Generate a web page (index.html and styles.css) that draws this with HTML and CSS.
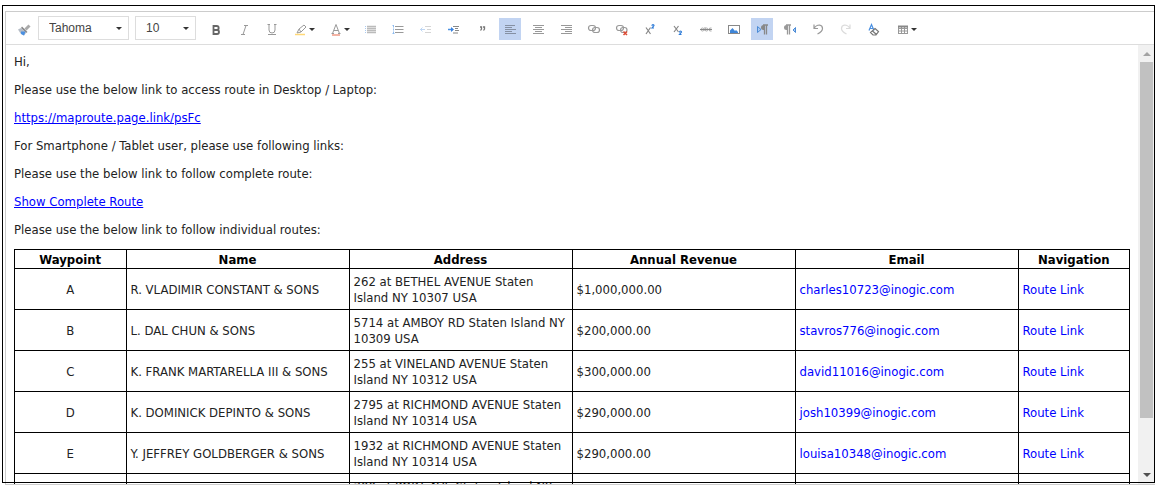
FILE: index.html
```
<!DOCTYPE html>
<html lang="en">
<head>
    <meta charset="UTF-8">
    <meta name="viewport" content="width=device-width, initial-scale=1.0">
    <title>Email Editor</title>
    <link rel="stylesheet" href="styles.css">
</head>
<body>
    <div class="page">
        <div class="editor">
            <div class="toolbar">
                <button class="tool painter" title="Format painter">
                    <svg viewBox="0 0 16 16"><path d="M13.500 3.500l-4 4" stroke="#aaa" stroke-width="3"/><path d="M6 4.500l5.500 5.500-1.500 1L5 6z" fill="#888"/><path d="M2 7.500l3-1.500 5 5-2 2.500-3.500-2z" fill="#b5bcc6"/><path d="M5 9.500h4.500l-1.500 4-3-1.500z" fill="#4a90e2"/></svg>
                </button>
                <span class="dropdown font-name">
                    <select aria-label="Font">
                        <option>Tahoma</option>
                    </select>
                    <span class="caret"></span>
                </span>
                <span class="dropdown font-size">
                    <select aria-label="Font size">
                        <option>10</option>
                    </select>
                    <span class="caret"></span>
                </span>
                <button class="tool" title="Bold">
                    <svg viewBox="0 0 16 16"><path d="M5.500 4h3.200a2 2 0 0 1 0 4H5.500zM5.500 8h3.500a2 2 0 0 1 0 4H5.500z" stroke="#666" stroke-width="1.800"/></svg>
                </button>
                <button class="tool" title="Italic">
                    <svg viewBox="0 0 16 16"><path d="M8 3.500h4M5 12.500h4M10 3.500l-3 9" stroke="#999"/></svg>
                </button>
                <button class="tool" title="Underline">
                    <svg viewBox="0 0 16 16"><path d="M5 2.500v5.500a3 3 0 0 0 6 0V2.500M3.500 2.500h2.500M10 2.500h2.500M4 12.500h8" stroke="#999"/></svg>
                </button>
                <button class="tool wide" title="Highlight color">
                    <svg viewBox="0 0 16 16"><path d="M4 11l2-4 5-4 2 2-5 5zM6 7l2 3" stroke="#999" fill="#fff"/><path d="M2 12.500h10" stroke="#ffd878" stroke-width="1.500"/></svg>
                    <span class="caret"></span>
                </button>
                <button class="tool wide" title="Font color">
                    <svg viewBox="0 0 16 16"><path d="M4.500 11.500l3.500-9 3.500 9M6 8.500h4M3.500 11.500h2.500M10 11.500h2.500" stroke="#999"/><path d="M4 13h8" stroke="#e8694a"/></svg>
                    <span class="caret"></span>
                </button>
                <button class="tool" title="Bulleted list">
                    <svg viewBox="0 0 16 16"><path d="M3 4.500h1M3 6.500h1M3 8.500h1M3 10.500h1" stroke="#a9cbf2"/><path d="M5 4.500h9M5 6.500h9M5 8.500h9M5 10.500h9" stroke="#bbb" stroke-width="1.600"/></svg>
                </button>
                <button class="tool" title="Numbered list">
                    <svg viewBox="0 0 16 16"><path d="M3.500 3v2.500M3.500 6.500v2M3.500 9.500v2.500M2.500 3.500h1M2.500 11.500h2" stroke="#8fbcf0"/><path d="M5 4.500h8.500M5 7.500h8.500M5 10.500h8.500" stroke="#999"/></svg>
                </button>
                <button class="tool faded" title="Decrease indent">
                    <svg viewBox="0 0 16 16"><path d="M2 7.500h5M4.500 5.500l-2 2 2 2" stroke="#4a90e2"/><path d="M7 4.500h6M9 7.500h4M7 10.500h6" stroke="#888"/></svg>
                </button>
                <button class="tool" title="Increase indent">
                    <svg viewBox="0 0 16 16"><path d="M2 7.500h5" stroke="#4a90e2" stroke-width="1.500"/><path d="M5 5l3 2.500-3 2.500z" fill="#3a83e0"/><path d="M7 4.500h6M9 6.500h3M9 8.500h4M7 11h5" stroke="#888"/></svg>
                </button>
                <button class="tool" title="Quote">
                    <svg viewBox="0 0 16 16"><path d="M6 5h1.500v2l-1 1.500M9 5h1.500v2l-1 1.500" stroke="#777" stroke-width="1.300"/></svg>
                </button>
                <button class="tool active" title="Align left">
                    <svg viewBox="0 0 16 16"><path d="M3 3.500h10M3 5.500h7M3 7.500h11M3 9.500h7M3 11.500h11" stroke="#8590a3"/></svg>
                </button>
                <button class="tool" title="Align center">
                    <svg viewBox="0 0 16 16"><path d="M3 3.500h11M5 5.500h7M3 7.500h11M5 9.500h7M3 11.500h11" stroke="#999"/></svg>
                </button>
                <button class="tool" title="Align right">
                    <svg viewBox="0 0 16 16"><path d="M3 3.500h11M7 5.500h7M3 7.500h11M7 9.500h7M3 11.500h11" stroke="#999"/></svg>
                </button>
                <button class="tool" title="Insert link">
                    <svg viewBox="0 0 16 16"><g stroke="#999" stroke-width="1.200"><rect x="2.500" y="3.500" width="7" height="5" rx="2.500"/><rect x="6.500" y="5.500" width="7" height="5" rx="2.500"/></g></svg>
                </button>
                <button class="tool" title="Remove link">
                    <svg viewBox="0 0 16 16"><g stroke="#999" stroke-width="1.200"><rect x="2.500" y="3.500" width="7" height="5" rx="2.500"/><rect x="6.500" y="5.500" width="6.500" height="5" rx="2.500"/></g><path d="M9.500 9.500l3.500 3.500M13 9.500l-3.500 3.500" stroke="#dc4b35" stroke-width="1.500"/></svg>
                </button>
                <button class="tool" title="Superscript">
                    <svg viewBox="0 0 16 16"><path d="M4 5.500l4.500 6.500M8.500 5.500l-4.500 6.500" stroke="#888" stroke-width="1.200"/><path d="M10 4q0-1.500 1-1.500t1 1L10 6h2" stroke="#2f7cd8" stroke-width="1.200"/></svg>
                </button>
                <button class="tool" title="Subscript">
                    <svg viewBox="0 0 16 16"><path d="M4 4l4.500 6M8.500 4L4 10" stroke="#888" stroke-width="1.200"/><path d="M9.500 10.500q0-1.500 1-1.500t1 1l-2 2.500h2" stroke="#2f7cd8" stroke-width="1.200"/></svg>
                </button>
                <button class="tool" title="Strikethrough">
                    <svg viewBox="0 0 16 16"><g stroke="#aaa"><circle cx="4.500" cy="7.500" r="1.500"/><circle cx="8.500" cy="7.500" r="1.500"/><path d="M7 5v4M13.500 6q-2.500-.5-2.500 1.500t2.500 1.500"/></g><path d="M2 7.500h12" stroke="#888"/></svg>
                </button>
                <button class="tool" title="Insert image">
                    <svg viewBox="0 0 16 16"><rect x="2.500" y="3.500" width="11" height="8" fill="#fff" stroke="#888"/><path d="M4 11V8.500L6.500 6 9 9l1-1 2 2v1z" fill="#3f86d8"/></svg>
                </button>
                <button class="tool active" title="Left to right">
                    <svg viewBox="0 0 16 16"><path d="M3.500 4.500l3.500 3-3.500 3z" fill="#a9c8f2" stroke="#4a8bd6"/><path d="M10.500 3H9.500a2.500 2.500 0 0 0 0 5h1z" fill="#888"/><path d="M9 3h5M10.500 3v9.500M12.500 3v9.500" stroke="#888" stroke-width="1.300"/></svg>
                </button>
                <button class="tool" title="Right to left">
                    <svg viewBox="0 0 16 16"><path d="M5.500 3H4.500a2.500 2.500 0 0 0 0 5H5.500z" fill="#999"/><path d="M4 3h5M5.500 3v9.500M7.500 3v9.500" stroke="#999" stroke-width="1.300"/><path d="M13.500 5.500l-2.500 2.500 2.500 2.500z" fill="#a9c8f2" stroke="#4a8bd6"/></svg>
                </button>
                <button class="tool" title="Undo">
                    <svg viewBox="0 0 16 16"><path d="M4 2.500v4h4M4 6.500q2-3.500 5.500-3.500 3 .5 3 3.500T7.500 12" stroke="#999" stroke-width="1.200"/></svg>
                </button>
                <button class="tool faded" title="Redo">
                    <svg viewBox="0 0 16 16"><path d="M12 2.500v4H8M12 6.500q-2-3.500-5.500-3.500-3 .5-3 3.500t5 5.500" stroke="#999" stroke-width="1.200"/></svg>
                </button>
                <button class="tool" title="Clear formatting">
                    <svg viewBox="0 0 16 16"><path d="M3 8.500l2.500-6 2.500 6M4 6.500h3" stroke="#4a90e2" stroke-width="1.200"/><path d="M9 6.500l3.500 3-2.500 3.500H7l-2.500-2.500zM6.500 9l4 3.500" stroke="#777" stroke-width="1.200"/></svg>
                </button>
                <button class="tool wide" title="Insert table">
                    <svg viewBox="0 0 16 16"><path d="M3.500 4v8M6.500 4v8M9.500 4v8M12.500 4v8M3 6.500h10M3 9h10M3 11.500h10" stroke="#999"/><path d="M3 4.500h10" stroke="#888" stroke-width="2"/></svg>
                    <span class="caret"></span>
                </button>
            </div>

            <div class="editor-body">
                <div class="content">
                    <p>Hi,</p>
                    <p>Please use the below link to access route in Desktop / Laptop:</p>
                    <p><a href="#">https://maproute.page.link/psFc</a></p>
                    <p>For Smartphone / Tablet user, please use following links:</p>
                    <p>Please use the below link to follow complete route:</p>
                    <p><a href="#">Show Complete Route</a></p>
                    <p>Please use the below link to follow individual routes:</p>

                    <table class="routes">
                        <colgroup>
                            <col class="narrow">
                            <col>
                            <col>
                            <col>
                            <col>
                            <col class="narrow">
                        </colgroup>
                        <thead>
                            <tr>
                                <th>Waypoint</th>
                                <th>Name</th>
                                <th>Address</th>
                                <th>Annual Revenue</th>
                                <th>Email</th>
                                <th>Navigation</th>
                            </tr>
                        </thead>
                        <tbody>
                            <tr>
                                <td class="waypoint">A</td>
                                <td>R. VLADIMIR CONSTANT &amp; SONS</td>
                                <td>262 at BETHEL AVENUE Staten Island NY 10307 USA</td>
                                <td>$1,000,000.00</td>
                                <td><a href="#">charles10723@inogic.com</a></td>
                                <td><a href="#">Route Link</a></td>
                            </tr>
                            <tr>
                                <td class="waypoint">B</td>
                                <td>L. DAL CHUN &amp; SONS</td>
                                <td>5714 at AMBOY RD Staten Island NY 10309 USA</td>
                                <td>$200,000.00</td>
                                <td><a href="#">stavros776@inogic.com</a></td>
                                <td><a href="#">Route Link</a></td>
                            </tr>
                            <tr>
                                <td class="waypoint">C</td>
                                <td>K. FRANK MARTARELLA III &amp; SONS</td>
                                <td>255 at VINELAND AVENUE Staten Island NY 10312 USA</td>
                                <td>$300,000.00</td>
                                <td><a href="#">david11016@inogic.com</a></td>
                                <td><a href="#">Route Link</a></td>
                            </tr>
                            <tr>
                                <td class="waypoint">D</td>
                                <td>K. DOMINICK DEPINTO &amp; SONS</td>
                                <td>2795 at RICHMOND AVENUE Staten Island NY 10314 USA</td>
                                <td>$290,000.00</td>
                                <td><a href="#">josh10399@inogic.com</a></td>
                                <td><a href="#">Route Link</a></td>
                            </tr>
                            <tr>
                                <td class="waypoint">E</td>
                                <td>Y. JEFFREY GOLDBERGER &amp; SONS</td>
                                <td>1932 at RICHMOND AVENUE Staten Island NY 10314 USA</td>
                                <td>$290,000.00</td>
                                <td><a href="#">louisa10348@inogic.com</a></td>
                                <td><a href="#">Route Link</a></td>
                            </tr>
                            <tr>
                                <td></td>
                                <td></td>
                                <td>300 at PORT AVE Staten Island NY 10314 USA</td>
                                <td></td>
                                <td></td>
                                <td></td>
                            </tr>
                        </tbody>
                    </table>
                </div>
                <div class="scrollbar">
                    <span class="arrow-up"></span>
                    <div class="track"><div class="thumb"></div></div>
                    <span class="arrow-down"></span>
                </div>
            </div>
        </div>
        <div class="outline"></div>
    </div>
</body>
</html>
```

FILE: styles.css
```
* {
    box-sizing: border-box;
}

body {
    margin: 0;
    background-color: #fff;
    color: #222;
    font-family: "DejaVu Sans Condensed", Tahoma, sans-serif;
    font-size: 13px;
    line-height: 16px;
}

.page {
    position: relative;
    display: flex;
    height: 100vh;
    padding: 11px 2px 1px 5px;
}

/* Black frame drawn on top of the editor */
.outline {
    position: absolute;
    top: 5px;
    right: 2px;
    bottom: 3px;
    left: 2px;
    border: 1px solid #000;
    pointer-events: none;
}

.editor {
    display: flex;
    flex: 1;
    flex-direction: column;
    border: 1px solid #ccc;
    border-right: none;
}

/* Toolbar */
.toolbar {
    display: flex;
    align-items: center;
    flex-shrink: 0;
    height: 33px;
    padding-left: 7px;
    border-bottom: 1px solid #ddd;
}

.tool {
    display: flex;
    align-items: center;
    justify-content: center;
    width: 22px;
    height: 22px;
    margin: 2px 6px 0 0;
    padding: 1px 0 0;
    border: none;
    background: none;
}

.tool svg {
    width: 16px;
    height: 16px;
    flex-shrink: 0;
    fill: none;
}

.painter {
    margin-right: 3px;
}

.wide {
    width: 29px;
}

.active {
    background-color: #c2d4f2;
}

.faded {
    opacity: 0.35;
}

.caret {
    border: 3px solid transparent;
    border-top-color: #333;
    border-bottom: none;
}

.dropdown {
    display: grid;
    align-items: center;
    height: 24px;
}

.dropdown select,
.dropdown .caret {
    grid-area: 1 / 1;
}

.dropdown .caret {
    justify-self: end;
    margin-right: 7px;
    pointer-events: none;
}

.dropdown select {
    width: 100%;
    height: 24px;
    padding: 0 10px;
    border: 1px solid #ddd;
    border-radius: 0;
    background-color: #fff;
    color: #444;
    font-family: "Liberation Sans", Arial, sans-serif;
    font-size: 12px;
    appearance: none;
}

.font-name {
    width: 91px;
    margin-right: 6px;
}

.font-size {
    width: 61px;
    margin-right: 9px;
}

/* Message */
.editor-body {
    display: flex;
    flex: 1;
    min-height: 0;
}

.content {
    flex: 1;
    padding: 9px 8px 0;
    overflow: hidden;
}

.content p {
    margin: 0 0 12px;
}

.content a {
    color: #00f;
}

.routes {
    width: 100%;
    margin-top: -1px;
    border-collapse: collapse;
    table-layout: fixed;
}

.routes col {
    width: 20%;
}

.routes .narrow {
    width: 10%;
}

.routes th,
.routes td {
    border: 1px solid #000;
    padding: 5px 4px 3px;
    text-align: left;
}

.routes th {
    padding: 2px 1px 0;
    color: #000;
    text-align: center;
}

.routes .waypoint {
    text-align: center;
}

.routes a {
    text-decoration: none;
}

/* Scrollbar */
.scrollbar {
    display: flex;
    flex-direction: column;
    align-items: center;
    width: 17px;
    padding: 7px 0;
    background-color: #f1f1f1;
}

.track {
    flex: 1;
    width: 13px;
    margin: 6px 0;
}

.thumb {
    height: 88%;
    background-color: #c1c1c1;
}

.arrow-up,
.arrow-down {
    border: 4px solid transparent;
}

.arrow-up {
    border-top: none;
    border-bottom-color: #a3a3a3;
}

.arrow-down {
    border-top-color: #505050;
    border-bottom: none;
}
```
